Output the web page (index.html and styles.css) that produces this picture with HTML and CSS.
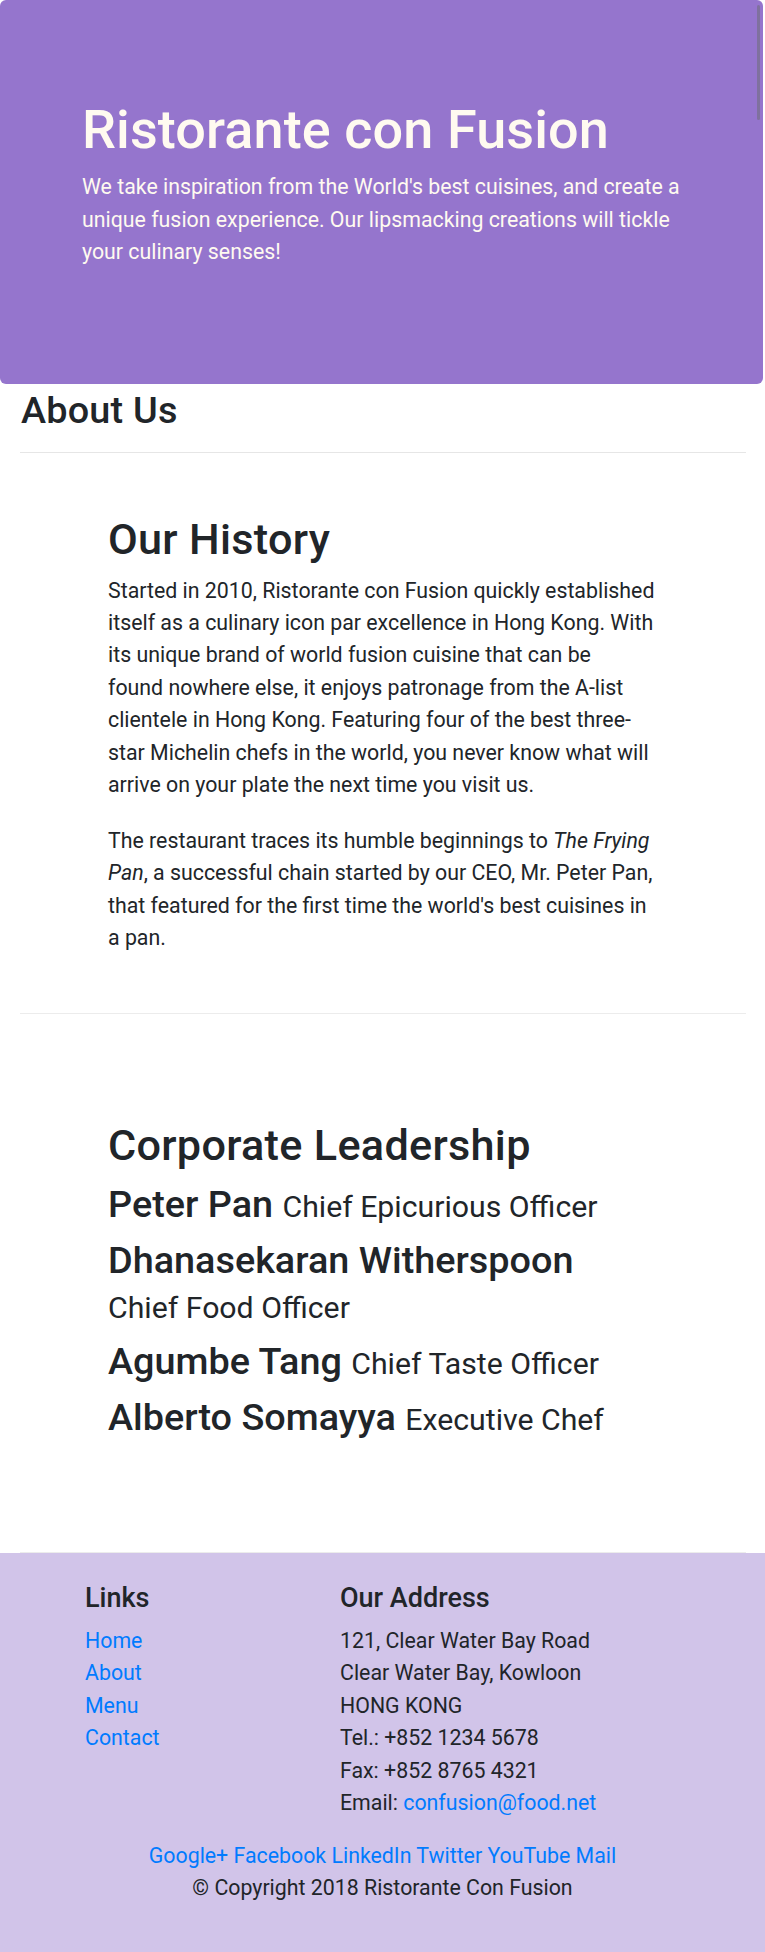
FILE: index.html
```html
<!DOCTYPE html>
<html lang="en">
<head>
<meta charset="utf-8">
<title>Ristorante con Fusion - About Us</title>
<link rel="stylesheet" href="styles.css">
</head>
<body>
<div class="scroll-thumb" aria-hidden="true"></div>

<header class="jumbotron">
  <div class="jumbotron-body">
    <h1 class="brand-title">Ristorante con Fusion</h1>
    <p class="brand-lead">We take inspiration from the World's best cuisines, and create a<br>unique fusion experience. Our lipsmacking creations will tickle<br>your culinary senses!</p>
  </div>
</header>

<main class="page">
  <h3 class="page-title">About Us</h3>
  <hr class="page-rule">

  <section class="row-content history">
    <h2 class="section-title">Our History</h2>
    <p class="history-text">Started in 2010, Ristorante con Fusion quickly established<br>itself as a culinary icon par excellence in Hong Kong. With<br>its unique brand of world fusion cuisine that can be<br>found nowhere else, it enjoys patronage from the A-list<br>clientele in Hong Kong. Featuring four of the best three-<br>star Michelin chefs in the world, you never know what will<br>arrive on your plate the next time you visit us.</p>
    <p class="history-text second">The restaurant traces its humble beginnings to <em>The Frying<br>Pan</em>, a successful chain started by our CEO, Mr. Peter Pan,<br>that featured for the first time the world's best cuisines in<br>a pan.</p>
  </section>

  <section class="row-content leadership">
    <h2 class="section-title">Corporate Leadership</h2>
    <h3 class="leader">Peter Pan <small class="leader-role">Chief Epicurious Officer</small></h3>
    <h3 class="leader">Dhanasekaran Witherspoon<br><small class="leader-role">Chief Food Officer</small></h3>
    <h3 class="leader">Agumbe Tang <small class="leader-role">Chief Taste Officer</small></h3>
    <h3 class="leader">Alberto Somayya <small class="leader-role">Executive Chef</small></h3>
  </section>
</main>

<footer class="footer">
  <div class="footer-cols">
    <div class="footer-col">
      <h5 class="footer-title">Links</h5>
      <ul class="footer-links">
        <li><a href="#home">Home</a></li>
        <li><a href="#about">About</a></li>
        <li><a href="#menu">Menu</a></li>
        <li><a href="#contact">Contact</a></li>
      </ul>
    </div>
    <div class="footer-col">
      <h5 class="footer-title">Our Address</h5>
      <address class="footer-address">
        121, Clear Water Bay Road<br>
        Clear Water Bay, Kowloon<br>
        HONG KONG<br>
        Tel.: +852 1234 5678<br>
        Fax: +852 8765 4321<br>
        Email: <a href="mailto:confusion@food.net">confusion@food.net</a>
      </address>
    </div>
  </div>
  <div class="footer-social">
    <a href="#google">Google+</a>
    <a href="#facebook">Facebook</a>
    <a href="#linkedin">LinkedIn</a>
    <a href="#twitter">Twitter</a>
    <a href="#youtube">YouTube</a>
    <a href="#mail">Mail</a>
  </div>
  <p class="copyright">© Copyright 2018 Ristorante Con Fusion</p>
</footer>
</body>
</html>
```
FILE: styles.css
```css
* { box-sizing: border-box; }

html, body {
  margin: 0;
  padding: 0;
}

html {
  background: #d1c4e9;
}

body {
  font-family: Roboto, "Liberation Sans", Arial, sans-serif;
  font-size: 21.33px;
  line-height: 32.4px;
  color: #212529;
  background: #ffffff;
  position: relative;
}

a {
  color: #007bff;
  text-decoration: none;
}

h1, h2, h3, h5 {
  font-weight: 500;
  margin: 0;
}

/* overlay scrollbar thumb seen in the capture */
.scroll-thumb {
  position: absolute;
  top: 5px;
  left: 757px;
  width: 3px;
  height: 115px;
  border-radius: 2px;
  background: rgba(110, 110, 120, 0.55);
  z-index: 5;
}

/* ---------- Jumbotron ---------- */
.jumbotron {
  background: #9575cd;
  margin: 0 2px 0 0;
  border-radius: 6px;
  padding: 98px 40px 115.5px 82px;
  color: #fffaf0;
}

.brand-title {
  font-size: 54px;
  line-height: 64.8px;
  margin-bottom: 8.7px;
  color: #fffaf0;
  letter-spacing: 0.1px;
}

.brand-lead {
  margin: 0;
  color: #fffaf0;
}

/* ---------- About ---------- */
.page-title {
  font-size: 37.8px;
  line-height: 45.36px;
  margin: 3.4px 0 0 21px;
  letter-spacing: 0.2px;
}

.page-rule {
  border: 0;
  border-top: 1px solid #e6e6e6;
  margin: 19.2px 19px 0 20px;
  height: 0;
}

.row-content {
  border-bottom: 1px solid #ececec;
  margin: 0 19px 0 20px;
  padding-left: 88px;
  padding-right: 40px;
}

.history {
  padding-top: 61.3px;
  padding-bottom: 58.9px;
}

.section-title {
  font-size: 43.2px;
  line-height: 51.84px;
  margin-bottom: 8.4px;
  letter-spacing: 0.3px;
}

.history-text {
  margin: 0;
}

.history-text.second {
  margin-top: 23.2px;
}

.leadership {
  padding-top: 105.3px;
  padding-bottom: 102px;
}

.leadership .section-title {
  margin-bottom: 10.3px;
}

.leader {
  font-size: 37.8px;
  line-height: 45.36px;
  margin-bottom: 10.5px;
}

.leader-role {
  font-size: 80%;
  font-weight: 400;
  line-height: 1;
}

/* ---------- Footer ---------- */
.footer {
  background: #d1c4e9;
  padding: 28.6px 0 26px;
}

.footer-cols {
  display: grid;
  grid-template-columns: 255px 1fr;
  padding-left: 85px;
}

.footer-title {
  font-size: 27px;
  line-height: 32.4px;
  margin-bottom: 10.5px;
}

.footer-links {
  list-style: none;
  margin: 0;
  padding: 0;
}

.footer-address {
  font-style: normal;
  margin: 0 0 20.6px;
}

.footer-social {
  text-align: center;
}

.copyright {
  text-align: center;
  margin: 0 0 21.6px;
}
```
